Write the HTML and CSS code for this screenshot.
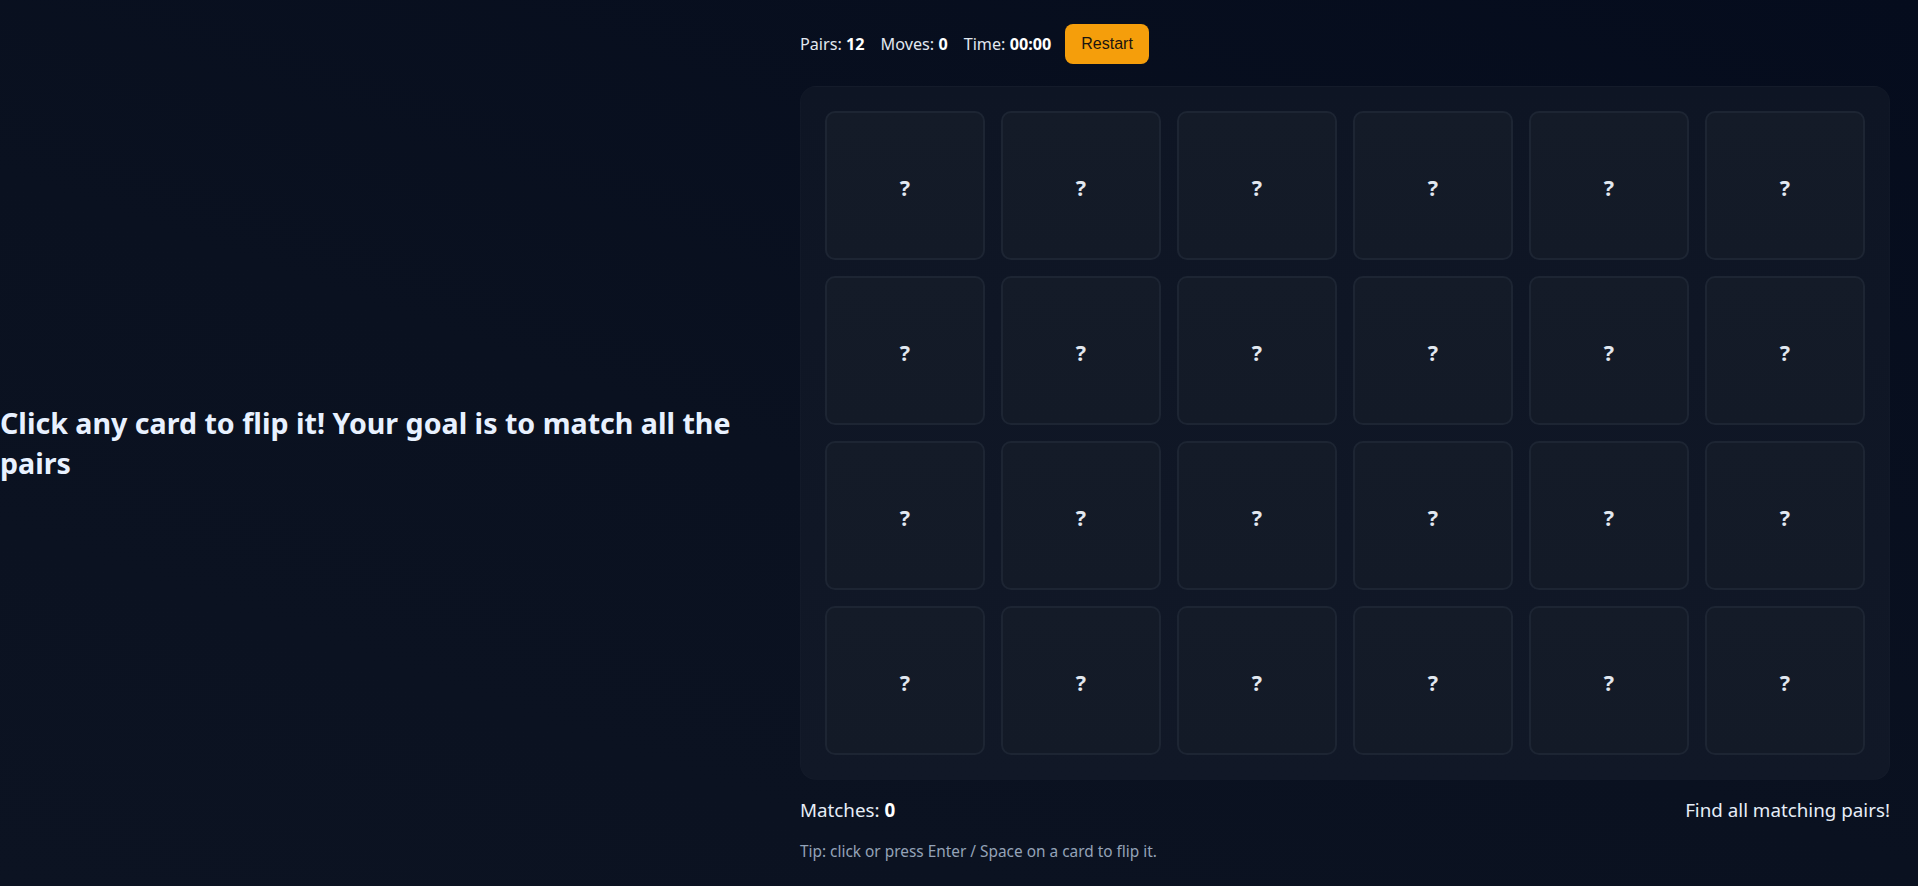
FILE: index.html
```html
<!DOCTYPE html>
<html lang="en">
<head>
<meta charset="utf-8">
<title>Memory Match</title>
<link rel="stylesheet" href="styles.css">
</head>
<body>
<div class="app">
  <section class="intro">
    <h1 class="intro-title">Click any card to flip it! Your goal is to match all the pairs</h1>
  </section>
  <main class="game">
    <div class="toolbar">
      <span class="stat">Pairs: <b>12</b></span>
      <span class="stat">Moves: <b>0</b></span>
      <span class="stat">Time: <b>00:00</b></span>
      <button class="restart" type="button">Restart</button>
    </div>
    <div class="board">
      <div class="card" tabindex="0">?</div>
      <div class="card" tabindex="0">?</div>
      <div class="card" tabindex="0">?</div>
      <div class="card" tabindex="0">?</div>
      <div class="card" tabindex="0">?</div>
      <div class="card" tabindex="0">?</div>
      <div class="card" tabindex="0">?</div>
      <div class="card" tabindex="0">?</div>
      <div class="card" tabindex="0">?</div>
      <div class="card" tabindex="0">?</div>
      <div class="card" tabindex="0">?</div>
      <div class="card" tabindex="0">?</div>
      <div class="card" tabindex="0">?</div>
      <div class="card" tabindex="0">?</div>
      <div class="card" tabindex="0">?</div>
      <div class="card" tabindex="0">?</div>
      <div class="card" tabindex="0">?</div>
      <div class="card" tabindex="0">?</div>
      <div class="card" tabindex="0">?</div>
      <div class="card" tabindex="0">?</div>
      <div class="card" tabindex="0">?</div>
      <div class="card" tabindex="0">?</div>
      <div class="card" tabindex="0">?</div>
      <div class="card" tabindex="0">?</div>
    </div>
    <div class="status">
      <div class="matches">Matches: <b>0</b></div>
      <div class="message">Find all matching pairs!</div>
    </div>
    <p class="tip">Tip: click or press Enter / Space on a card to flip it.</p>
  </main>
</div>
</body>
</html>
```
FILE: styles.css
```css
* { box-sizing: border-box; }

html, body {
  margin: 0;
  height: 100%;
}

body {
  font-family: "Noto Sans", "Open Sans", sans-serif;
  color: #e6edf7;
  background: linear-gradient(200deg, #050c1d 0%, #0a1120 55%, #0c1322 100%);
  overflow: hidden;
}

.app {
  display: grid;
  grid-template-columns: 1fr 1090px;
  column-gap: 20px;
  padding-right: 28px;
  height: 100vh;
}

.intro {
  display: flex;
  align-items: center;
  min-width: 0;
}

.intro-title {
  margin: 0;
  font-size: 28.6px;
  line-height: 40px;
  font-weight: 700;
  color: #e8f1ff;
}

.game {
  padding-top: 24px;
  display: flex;
  flex-direction: column;
}

.toolbar {
  display: flex;
  align-items: center;
  height: 40px;
  font-size: 16.2px;
  color: #e2e8f0;
}

.stat { margin-right: 16px; }
.stat:nth-child(3) { margin-right: 14px; }
.stat b { color: #ffffff; font-weight: 700; }

.restart {
  height: 40px;
  padding: 0 16px;
  border: none;
  border-radius: 8px;
  background: #f59e0b;
  color: #1a1410;
  font-family: "Liberation Sans", Arial, sans-serif;
  font-size: 16px;
}

.board {
  margin-top: 22px;
  display: grid;
  grid-template-columns: repeat(6, 160px);
  grid-auto-rows: 149px;
  gap: 16px;
  padding: 24px;
  border: 1px solid rgba(255, 255, 255, 0.015);
  border-radius: 16px;
  background: linear-gradient(180deg, #0e1524 0%, #111827 100%);
}

.card {
  display: flex;
  align-items: center;
  justify-content: center;
  border: 2px solid #1d2533;
  border-radius: 10px;
  background: linear-gradient(180deg, #141b28 0%, #131a27 100%);
  color: #e2e8f0;
  font-size: 21.5px;
  font-weight: 700;
  padding-top: 3px;
}

.status {
  margin-top: 16px;
  display: flex;
  justify-content: space-between;
  font-size: 18.8px;
  line-height: 28px;
  color: #e6edf7;
}

.status b { font-weight: 700; color: #ffffff; }

.tip {
  margin: 18px 0 0;
  font-size: 15.4px;
  line-height: 20px;
  color: #94a3b8;
}
```
